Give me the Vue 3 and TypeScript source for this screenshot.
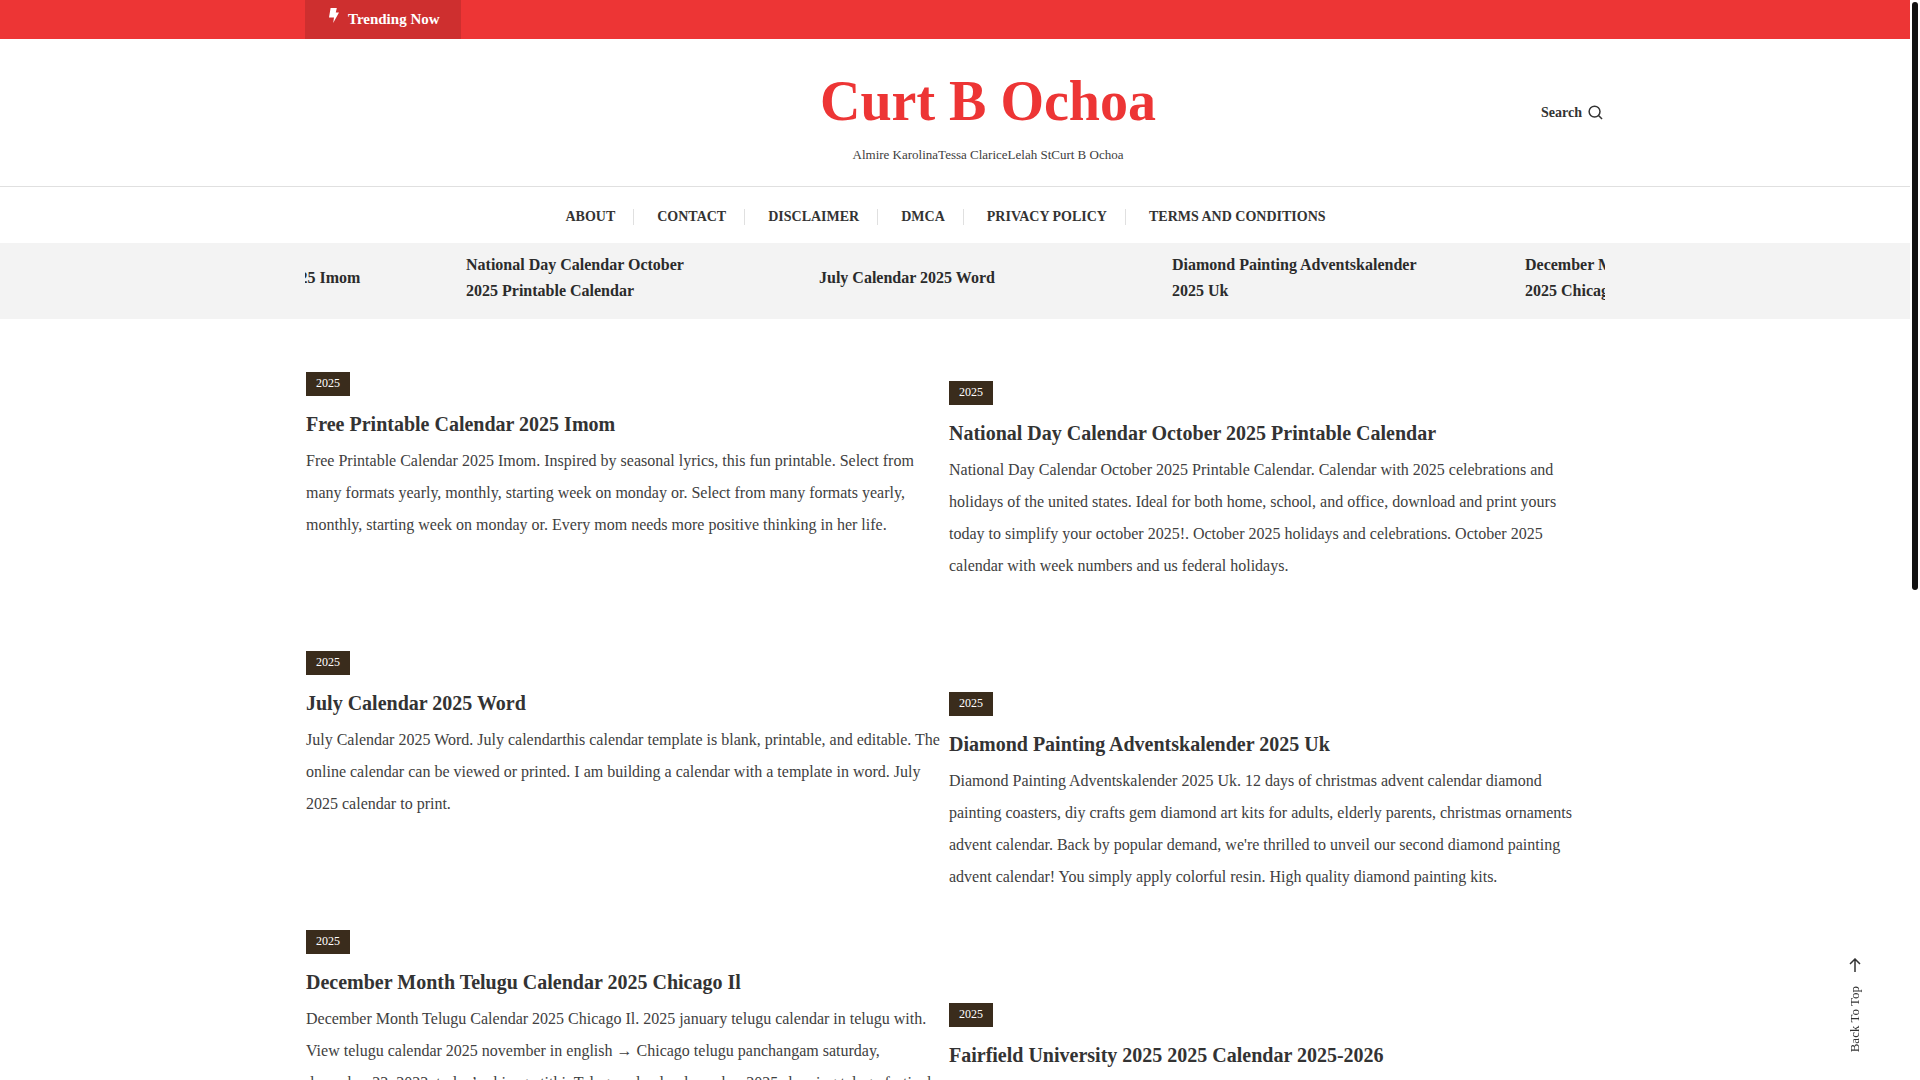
<script setup lang="ts">
interface Post {
  title: string
  text: string
}

const menu: string[] = ['About', 'Contact', 'Disclaimer', 'DMCA', 'Privacy Policy', 'Terms And Conditions']

const ticker: string[] = [
  'Free Printable Calendar 2025 Imom',
  'National Day Calendar October 2025 Printable Calendar',
  'July Calendar 2025 Word',
  'Diamond Painting Adventskalender 2025 Uk',
  'December Month Telugu Calendar 2025 Chicago Il',
]

const columns: Post[][] = [
  [
    {
      title: 'Free Printable Calendar 2025 Imom',
      text: 'Free Printable Calendar 2025 Imom. Inspired by seasonal lyrics, this fun printable. Select from many formats yearly, monthly, starting week on monday or. Select from many formats yearly, monthly, starting week on monday or. Every mom needs more positive thinking in her life.',
    },
    {
      title: 'July Calendar 2025 Word',
      text: 'July Calendar 2025 Word. July calendarthis calendar template is blank, printable, and editable. The online calendar can be viewed or printed. I am building a calendar with a template in word. July 2025 calendar to print.',
    },
    {
      title: 'December Month Telugu Calendar 2025 Chicago Il',
      text: 'December Month Telugu Calendar 2025 Chicago Il. 2025 january telugu calendar in telugu with. View telugu calendar 2025 november in english → Chicago telugu panchangam saturday, december 23, 2023, today’s chicago tithi. Telugu calendar december 2025 showing telugu festivals',
    },
  ],
  [
    {
      title: 'National Day Calendar October 2025 Printable Calendar',
      text: 'National Day Calendar October 2025 Printable Calendar. Calendar with 2025 celebrations and holidays of the united states. Ideal for both home, school, and office, download and print yours today to simplify your october 2025!. October 2025 holidays and celebrations. October 2025 calendar with week numbers and us federal holidays.',
    },
    {
      title: 'Diamond Painting Adventskalender 2025 Uk',
      text: "Diamond Painting Adventskalender 2025 Uk. 12 days of christmas advent calendar diamond painting coasters, diy crafts gem diamond art kits for adults, elderly parents, christmas ornaments advent calendar. Back by popular demand, we're thrilled to unveil our second diamond painting advent calendar! You simply apply colorful resin. High quality diamond painting kits.",
    },
    {
      title: 'Fairfield University 2025 2025 Calendar 2025-2026',
      text: '',
    },
  ],
]
</script>

<template>
  <div class="page">
    <div class="topbar">
      <div class="wrap">
        <div class="trending">
          <svg class="bolt" viewBox="0 0 10 16" aria-hidden="true">
            <path d="M1.6 0h6.2L6.8 4.4H10L4.2 15l.8-5.6H0z" fill="currentColor" />
          </svg>
          <span>Trending Now</span>
        </div>
      </div>
    </div>

    <header class="header">
      <div class="wrap header-row">
        <div class="header-side"></div>
        <div class="brand">
          <h1><a href="#">Curt B Ochoa</a></h1>
          <p>Almire KarolinaTessa ClariceLelah StCurt B Ochoa</p>
        </div>
        <button class="search" type="button">
          <span>Search</span>
          <svg viewBox="0 0 16 16" aria-hidden="true">
            <circle cx="7" cy="7" r="5.8" />
            <path d="M11.2 11.2 15 15" />
          </svg>
        </button>
      </div>
    </header>

    <nav class="nav">
      <ul>
        <li v-for="item in menu" :key="item"><a href="#">{{ item }}</a></li>
      </ul>
    </nav>

    <section class="ticker">
      <div class="wrap ticker-window">
        <div class="ticker-track">
          <div v-for="item in ticker" :key="item" class="ticker-item"><a href="#">{{ item }}</a></div>
        </div>
      </div>
    </section>

    <main class="wrap posts">
      <div v-for="(column, index) in columns" :key="index" class="column">
        <article v-for="post in column" :key="post.title">
          <a class="badge" href="#">2025</a>
          <h2><a href="#">{{ post.title }}</a></h2>
          <p v-if="post.text">{{ post.text }}</p>
        </article>
      </div>
    </main>

    <button class="to-top" type="button">
      <svg viewBox="0 0 12 14" aria-hidden="true">
        <path d="M6 14V1M1 6l5-5 5 5" />
      </svg>
      <span>Back To Top</span>
    </button>
    <div class="scroll-thumb"></div>
  </div>
</template>

<style>
html {
  scrollbar-width: none;
}
body {
  background: #fff;
}
</style>

<style scoped>
.page {
  padding-right: 10px;
  font-family: "Liberation Serif", "Times New Roman", serif;
  font-size: 16px;
  color: #404040;
  overflow-x: hidden;
}
a {
  color: inherit;
  text-decoration: none;
}
button {
  padding: 0;
  border: 0;
  background: none;
  font-family: inherit;
  color: #333;
  cursor: pointer;
}
.wrap {
  max-width: 1300px;
  margin: 0 auto;
}
.topbar {
  background: #ed3535;
}
.trending {
  display: inline-flex;
  align-items: center;
  gap: 9px;
  height: 39px;
  padding: 0 21px 0 24px;
  box-sizing: border-box;
  background: #ce2f2f;
  color: #fff;
  font-size: 15px;
  font-weight: 700;
  vertical-align: top;
}
.bolt {
  width: 10px;
  height: 16px;
  margin-bottom: 8px;
}
.header {
  border-bottom: 1px solid #e0e0e0;
}
.header-row {
  display: flex;
  justify-content: space-between;
  align-items: center;
  height: 147px;
}
.header-side {
  width: 130px;
}
.brand {
  padding-top: 8px;
  text-align: center;
}
.brand h1 {
  margin: 0;
  font-size: 56px;
  line-height: 68px;
  color: #ed3535;
}
.brand p {
  margin: 8px 0 0;
  font-size: 13px;
  line-height: 24px;
}
.search {
  display: flex;
  align-items: center;
  gap: 6px;
  padding-right: 2px;
  font-size: 14px;
  font-weight: 700;
}
.search svg {
  width: 15px;
  height: 15px;
  fill: none;
  stroke: currentColor;
  stroke-width: 1.6;
}
.nav ul {
  display: flex;
  justify-content: center;
  gap: 23px;
  margin: 0;
  padding: 20px 0 16px;
  list-style: none;
}
.nav li {
  padding: 0 19px 0 0;
  background: linear-gradient(#e0e0e0, #e0e0e0) right center / 1px 16px no-repeat;
  font-size: 14px;
  font-weight: 700;
  line-height: 20px;
  text-transform: uppercase;
  color: #333;
}
.nav li:last-child {
  background: none;
}
.ticker {
  background: #f3f3f3;
}
.ticker-window {
  overflow: hidden;
}
.ticker-track {
  display: flex;
  align-items: center;
  height: 76px;
  margin-left: -192px;
}
.ticker-item {
  flex: 0 0 353px;
  box-sizing: border-box;
  padding: 0 100px 6px 0;
  font-weight: 700;
  line-height: 26px;
  color: #2b2b2b;
}
.posts {
  display: flex;
  gap: 7px;
  padding: 53px 20px 40px 1px;
  box-sizing: border-box;
}
.column {
  flex: 1;
  min-width: 0;
}
.column:nth-child(2) {
  padding-top: 9px;
}
article {
  padding-bottom: 110px;
}
.badge {
  display: block;
  width: 44px;
  height: 24px;
  background: #3a2c1c;
  color: #fff;
  font-size: 12px;
  line-height: 22px;
  text-align: center;
}
h2 {
  margin: 14px 0 7px;
  font-size: 20px;
  line-height: 28px;
  color: #333;
}
article p {
  margin: 0;
  line-height: 32px;
}
.to-top {
  position: fixed;
  right: 57px;
  bottom: 28px;
  display: flex;
  flex-direction: column;
  align-items: center;
  gap: 14px;
  font-size: 13px;
}
.to-top span {
  writing-mode: vertical-rl;
  transform: rotate(180deg);
}
.to-top svg {
  width: 12px;
  height: 14px;
  fill: none;
  stroke: currentColor;
  stroke-width: 1.5;
}
.scroll-thumb {
  position: fixed;
  top: 2px;
  right: 2px;
  width: 6px;
  height: 588px;
  border-radius: 3px;
  background: #111;
}
</style>
